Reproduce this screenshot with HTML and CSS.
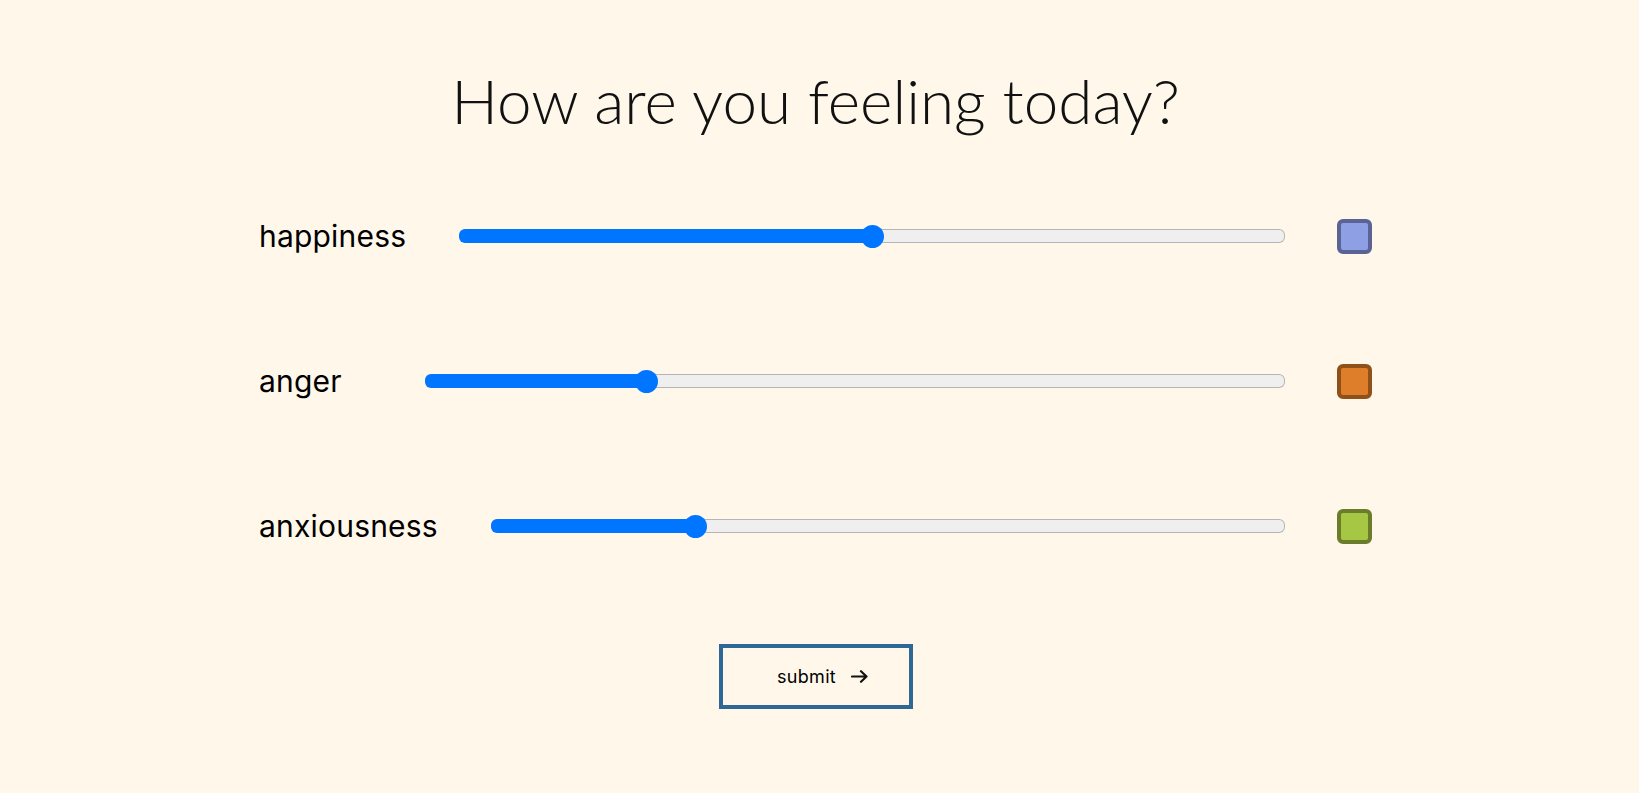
FILE: index.html
```html
<!DOCTYPE html>
<html lang="en">
<head>
<meta charset="utf-8">
<title>How are you feeling today?</title>
<link rel="stylesheet" href="styles.css">
</head>
<body>
<main class="page">
  <h1 class="title">How are you feeling today?</h1>
  <form class="mood-form">
    <div class="row">
      <label class="label" for="happiness">happiness</label>
      <input class="slider" id="happiness" type="range" min="0" max="100" value="50" style="--p:50%">
      <span class="swatch swatch--happy"></span>
    </div>
    <div class="row">
      <label class="label label--wide" for="anger">anger</label>
      <input class="slider" id="anger" type="range" min="0" max="100" value="25" style="--p:25%">
      <span class="swatch swatch--anger"></span>
    </div>
    <div class="row">
      <label class="label" for="anxiousness">anxiousness</label>
      <input class="slider" id="anxiousness" type="range" min="0" max="100" value="25" style="--p:25%">
      <span class="swatch swatch--anx"></span>
    </div>
    <div class="actions">
      <button class="submit" type="button">
        <span>submit</span>
        <svg class="arrow" width="17" height="13" viewBox="0 0 17 13" aria-hidden="true">
          <path d="M1 6.5H15.5M10 1.2L15.5 6.5L10 11.8" fill="none" stroke="#111" stroke-width="2.2" stroke-linecap="round" stroke-linejoin="round"/>
        </svg>
      </button>
    </div>
  </form>
</main>
</body>
</html>
```

FILE: styles.css
```css
html, body {
  margin: 0;
  padding: 0;
  background: #fff8ea;
}

body {
  font-family: "Inter", "Liberation Sans", sans-serif;
  color: #000;
}

.page {
  padding: 0 8px 0 0;
}

.title {
  margin: 64px 0 0;
  text-align: center;
  font-family: "Lato", "Liberation Sans", sans-serif;
  font-weight: 300;
  font-size: 62px;
  line-height: 72px;
  letter-spacing: 0;
  color: #111;
}

.mood-form {
  width: 1113px;
  margin: 0 auto;
  padding-top: 82px;
}

.row {
  display: flex;
  align-items: center;
  height: 36px;
}

.row + .row {
  margin-top: 109px;
}

.label {
  font-size: 30px;
  font-weight: 400;
  letter-spacing: 0.2px;
  margin-right: 53px;
  white-space: nowrap;
}

.label--wide {
  margin-right: 83px;
}

.slider {
  -webkit-appearance: none;
  appearance: none;
  flex: 1;
  min-width: 0;
  height: 12px;
  margin: 0;
  border-radius: 6px;
  border: 1px solid transparent;
  background:
    linear-gradient(#0075ff, #0075ff) border-box no-repeat 0 0 / var(--p) 100%,
    linear-gradient(#efefef, #efefef) padding-box,
    linear-gradient(#b5b5b5, #b5b5b5) border-box;
  outline: none;
}

.slider::-webkit-slider-thumb {
  -webkit-appearance: none;
  appearance: none;
  width: 23px;
  height: 23px;
  border-radius: 50%;
  background: #0075ff;
  border: none;
}

.swatch {
  flex: none;
  width: 35px;
  height: 35px;
  margin-left: 52px;
  box-sizing: border-box;
  border: 4px solid;
  border-radius: 6px;
}

.swatch--happy {
  background: #8e9fe4;
  border-color: #5a6494;
}

.swatch--anger {
  background: #df7e2a;
  border-color: #8f501a;
}

.swatch--anx {
  background: #a6c744;
  border-color: #6b7d2a;
}

.actions {
  display: flex;
  justify-content: center;
  margin-top: 100px;
}

.submit {
  display: flex;
  align-items: center;
  justify-content: center;
  gap: 15px;
  width: 194px;
  height: 65px;
  padding: 0 0 0 14px;
  box-sizing: border-box;
  border: 4px solid #2d6896;
  background: transparent;
  font-family: "Inter", "Liberation Sans", sans-serif;
  font-size: 18px;
  letter-spacing: 0.3px;
  color: #000;
  cursor: pointer;
}

.arrow {
  display: block;
}
```
